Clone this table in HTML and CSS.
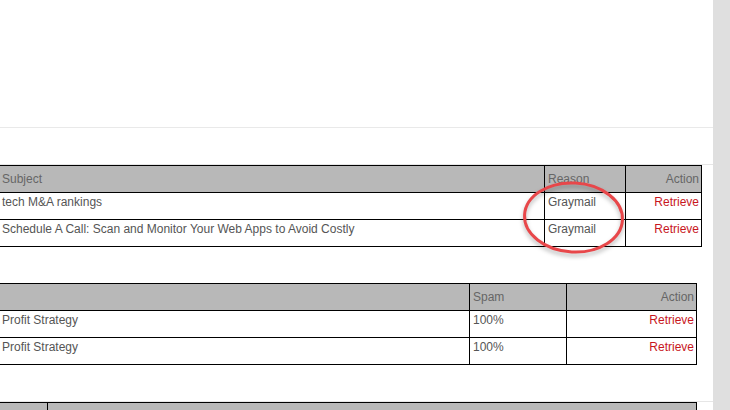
FILE: index.html
```html
<!DOCTYPE html>
<html>
<head>
<meta charset="utf-8">
<link rel="stylesheet" href="styles.css">
</head>
<body>
<div class="page">
  <div class="main">
    <div class="top"></div>
    <section class="section">
      <table class="grid t1">
        <colgroup><col class="c1a"><col class="c1b"><col></colgroup>
        <thead>
          <tr><th>Subject</th><th>Reason</th><th class="r">Action</th></tr>
        </thead>
        <tbody>
          <tr><td>tech M&amp;A rankings</td><td>Graymail</td><td class="r"><a class="act">Retrieve</a></td></tr>
          <tr><td>Schedule A Call: Scan and Monitor Your Web Apps to Avoid Costly</td><td>Graymail</td><td class="r"><a class="act">Retrieve</a></td></tr>
        </tbody>
      </table>
      <table class="grid t2">
        <colgroup><col class="c2a"><col class="c2b"><col></colgroup>
        <thead>
          <tr><th></th><th>Spam</th><th class="r">Action</th></tr>
        </thead>
        <tbody>
          <tr><td>Profit Strategy</td><td>100%</td><td class="r"><a class="act">Retrieve</a></td></tr>
          <tr><td>Profit Strategy</td><td>100%</td><td class="r"><a class="act">Retrieve</a></td></tr>
        </tbody>
      </table>
    </section>
    <section class="section">
      <table class="grid t3">
        <colgroup><col class="c3a"><col></colgroup>
        <thead>
          <tr><th></th><th></th></tr>
        </thead>
      </table>
    </section>
    <svg class="mark" width="112" height="84" viewBox="0 0 112 84" aria-hidden="true">
      <ellipse cx="55.5" cy="41.5" rx="49" ry="34.5" fill="none" stroke="#e8474a" stroke-width="3" transform="rotate(3 55.5 41.5)"/>
    </svg>
  </div>
  <div class="scrollbar"></div>
</div>
</body>
</html>
```

FILE: styles.css
```css
html, body {
  margin: 0;
  padding: 0;
  background: #ffffff;
  overflow: hidden;
}
body {
  font-family: "Liberation Sans", Arial, sans-serif;
  font-size: 12px;
  color: #555555;
}
.page {
  display: flex;
  width: 730px;
  height: 410px;
  overflow: hidden;
}
.main {
  position: relative;
  width: 713px;
  flex: 0 0 713px;
}
.scrollbar {
  flex: 1;
  background: #dfdfdf;
}
.top {
  height: 127px;
  border-bottom: 1px solid #e9e9e9;
  margin-bottom: 36px;
}
.section {
  border-top: 1px solid #e6e6e6;
  display: flex;
  flex-direction: column;
  gap: 36px;
  padding-bottom: 36px;
}
.grid {
  table-layout: fixed;
  border-collapse: separate;
  border-spacing: 0;
  border-top: 1px solid #000;
  border-left: 1px solid #000;
  margin-left: -2px;
}
.grid th,
.grid td {
  box-sizing: border-box;
  height: 27px;
  border-right: 1px solid #000;
  border-bottom: 1px solid #000;
  padding: 2px 2px 0 3px;
  text-align: left;
  white-space: nowrap;
  overflow: hidden;
  line-height: 14px;
}
.grid th {
  background: #b8b8b8;
  color: #666666;
  font-weight: normal;
  vertical-align: middle;
  padding-top: 0;
}
.grid td {
  vertical-align: top;
}
.grid .r {
  text-align: right;
}
.act {
  color: #c8161d;
  text-decoration: none;
}
.t1 { width: 704px; }
.c1a { width: 546px; }
.c1b { width: 81px; }
.t2 { width: 699px; }
.c2a { width: 471px; }
.c2b { width: 97px; }
.t3 { width: 699px; }
.c3a { width: 49px; }
.mark {
  position: absolute;
  left: 518px;
  top: 176px;
  filter: drop-shadow(0 3px 2px rgba(0, 0, 0, 0.28));
}
```
